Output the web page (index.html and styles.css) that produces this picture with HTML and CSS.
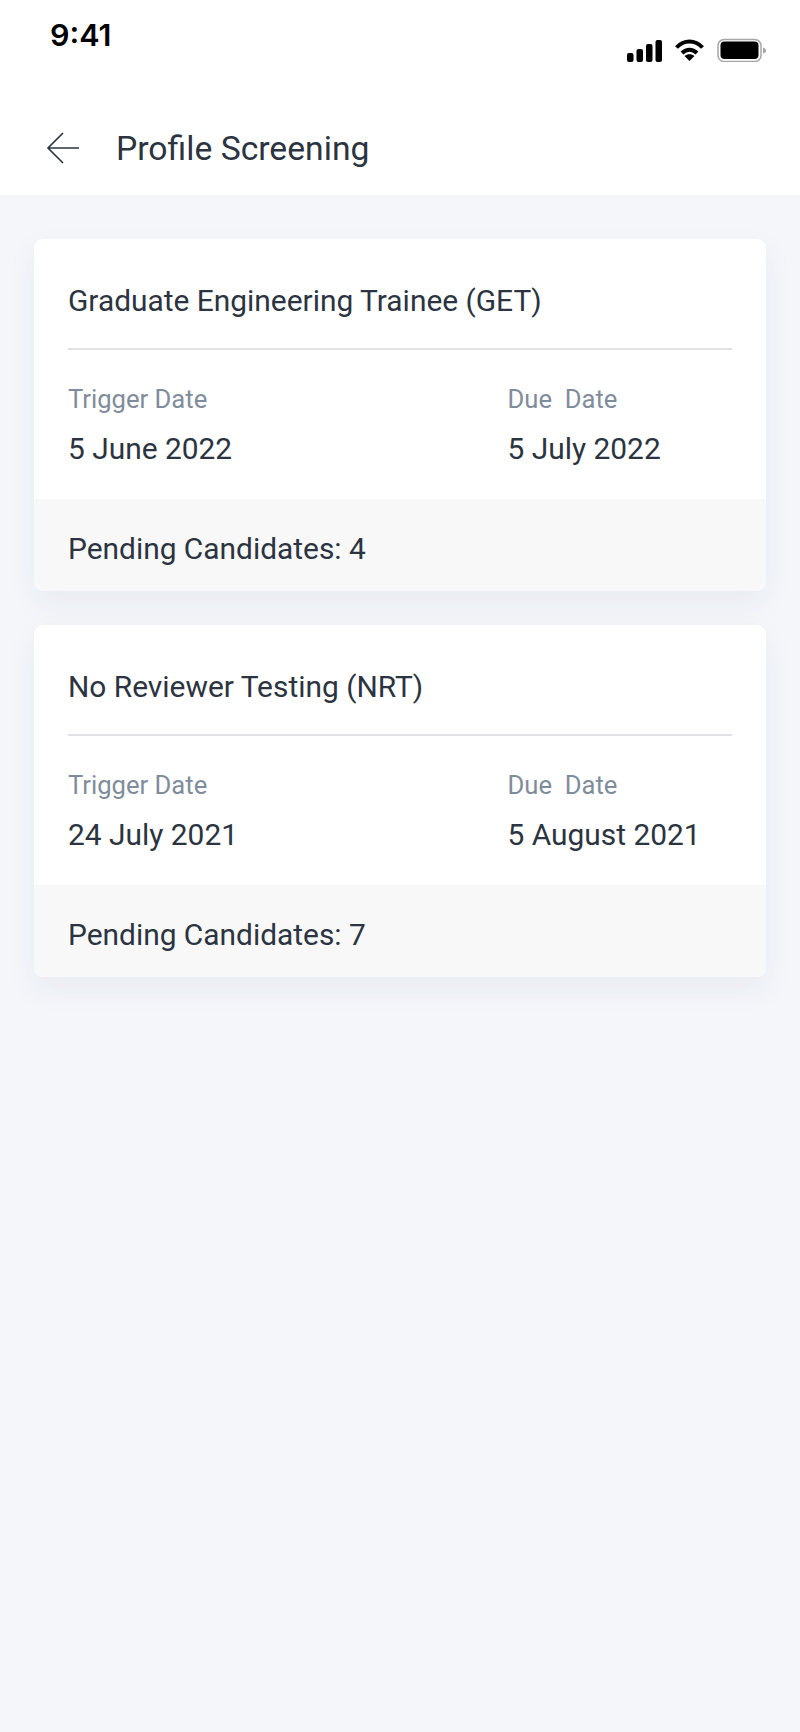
FILE: index.html
```html
<!DOCTYPE html>
<html>
  <head>
    <title>Profile Screening</title>
    <link rel="stylesheet" href="styles.css">
  </head>
  <body>
    <div class="status-bar">
      <span class="time">9:41</span>
      <div class="status-icons">
        <svg width="35" height="24" viewBox="0 0 35 24">
          <rect x="0" y="15" width="6.500" height="9" rx="2"/>
          <rect x="9.500" y="11" width="6.500" height="13" rx="2"/>
          <rect x="19" y="6" width="6.500" height="18" rx="2"/>
          <rect x="28.500" y="2" width="6.500" height="22" rx="2"/>
        </svg>
        <svg width="29" height="24" viewBox="0 0 29 24">
          <path d="M1.500 9.500 C9 1.500 20 1.500 27.500 9.500" fill="none" stroke="#000" stroke-width="4"/>
          <path d="M7 15 C11.500 10.500 17.500 10.500 22 15" fill="none" stroke="#000" stroke-width="4"/>
          <path d="M14.500 23 L9.500 18 C12.500 15.500 16.500 15.500 19.500 18 Z"/>
        </svg>
        <svg width="49" height="24" viewBox="0 0 49 24">
          <rect x="1" y="1.500" width="43" height="22" rx="6" fill="none" stroke="#a6a6a6" stroke-width="1.500"/>
          <rect x="3.500" y="3.500" width="38" height="17.500" rx="4"/>
          <path d="M46 9.500 C48 10 49 11 49 12.500 C49 14 48 15 46 15.500 Z" fill="#a6a6a6"/>
        </svg>
      </div>
    </div>
    <div class="top-bar">
      <svg class="back" width="34" height="32" viewBox="0 0 34 32">
        <path d="M17 1 L2 16 L17 31 M2 16 L33 16" fill="none" stroke="#2b3440" stroke-width="1.600"/>
      </svg>
      <h1 class="page-title">Profile Screening</h1>
    </div>

    <div class="content">
      <div class="card">
        <div class="card-body">
          <div class="card-title">Graduate Engineering Trainee (GET)</div>
          <div class="dates">
            <div class="date-col">
              <div class="date-label">Trigger Date</div>
              <div class="date-value">5 June 2022</div>
            </div>
            <div class="date-col due">
              <div class="date-label">Due&nbsp; Date</div>
              <div class="date-value">5 July 2022</div>
            </div>
          </div>
        </div>
        <div class="card-footer">Pending Candidates: 4</div>
      </div>

      <div class="card">
        <div class="card-body">
          <div class="card-title">No Reviewer Testing (NRT)</div>
          <div class="dates">
            <div class="date-col">
              <div class="date-label">Trigger Date</div>
              <div class="date-value">24 July 2021</div>
            </div>
            <div class="date-col due">
              <div class="date-label">Due&nbsp; Date</div>
              <div class="date-value">5 August 2021</div>
            </div>
          </div>
        </div>
        <div class="card-footer">Pending Candidates: 7</div>
      </div>
    </div>
  </body>
</html>
```
FILE: styles.css
```css
html, body {
  margin: 0;
  height: 100%;
}
body {
  background-color: #f4f6fa;
  font-family: Roboto, "Liberation Sans", sans-serif;
  color: #2b3440;
}
.status-bar {
  display: flex;
  justify-content: space-between;
  height: 94px;
  padding: 0 34px 0 50px;
  background-color: white;
  box-sizing: border-box;
}
.time {
  font-family: Inter, sans-serif;
  font-size: 30.500px;
  font-weight: 600;
  line-height: 35px;
  margin-top: 17px;
  color: #000;
}
.status-icons {
  display: flex;
  gap: 13px;
  margin-top: 38px;
  height: 24px;
}
.top-bar {
  display: flex;
  align-items: center;
  height: 101px;
  padding: 7px 0 0 46px;
  background-color: white;
  box-sizing: border-box;
}
.back {
  margin-right: 36px;
}
.page-title {
  margin: 0;
  font-size: 33.700px;
  font-weight: 400;
}
.content {
  display: flex;
  flex-direction: column;
  gap: 34px;
  padding: 44px 34px 0 34px;
}
.card {
  background-color: white;
  border-radius: 9px;
  overflow: hidden;
  box-shadow: 0 12px 32px rgba(40, 50, 90, 0.06);
}
.card-body {
  padding: 0 34px;
}
.card-title {
  height: 109px;
  line-height: 124px;
  font-size: 29.900px;
  border-bottom: 2px solid #e0e2e8;
}
.dates {
  display: flex;
  height: 149px;
}
.date-col {
  flex: 1;
}
.date-col.due {
  flex: 0 0 224.500px;
}
.date-label {
  margin-top: 34px;
  font-size: 25.600px;
  line-height: 30px;
  color: #7f8c9b;
}
.date-value {
  margin-top: 17px;
  font-size: 29.900px;
  line-height: 36px;
}
.card-footer {
  height: 92px;
  line-height: 99px;
  padding: 0 34px;
  font-size: 29.900px;
  background-color: #f8f8f9;
}
```
